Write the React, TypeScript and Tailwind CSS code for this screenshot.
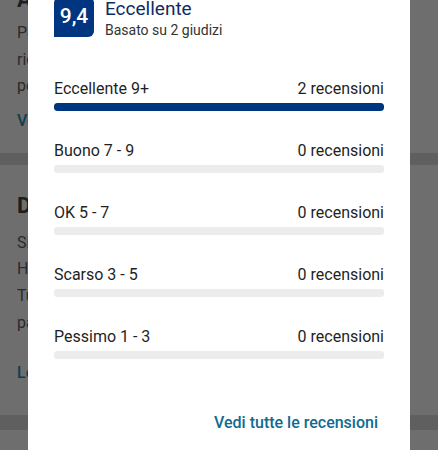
import React from "react";

const rows = [
  { label: "Eccellente 9+", count: "2 recensioni", pct: 100 },
  { label: "Buono 7 - 9", count: "0 recensioni", pct: 0 },
  { label: "OK 5 - 7", count: "0 recensioni", pct: 0 },
  { label: "Scarso 3 - 5", count: "0 recensioni", pct: 0 },
  { label: "Pessimo 1 - 3", count: "0 recensioni", pct: 0 },
];

export default function App() {
  return (
    <div className="relative h-[450px] w-[438px] overflow-hidden bg-[#6e6e6e] font-['Roboto','Liberation_Sans',sans-serif]">
      {/* background page (dimmed) */}
      <div className="flex flex-col">
        <div className="px-[17px] pb-[18px]">
          <div className="mt-[-14px] text-[22px] font-bold leading-[28px] text-[#1e1e1e] whitespace-nowrap">
            Aspetti più apprezzati
          </div>
          <div className="mt-[6px] text-[16px] leading-[26.67px] text-[#2a2a2a]">
            <div className="truncate">Posizione eccellente, a pochi passi dal centro storico</div>
            <div className="flex justify-between whitespace-nowrap">
              <span>ricco di negozi e ristoranti</span>
              <span className="pr-[22px]">l</span>
            </div>
            <div className="truncate">perfetto per una vacanza</div>
          </div>
          <div className="mt-[8px] text-[16px] font-medium leading-[26.67px] text-[#0e3e4e]">
            Vedi di più
          </div>
        </div>
        <div className="h-[12px] bg-[#5f5f5f]" />
        <div className="px-[17px] pt-[27px] pb-[28px]">
          <div className="text-[22px] font-bold leading-[28px] text-[#1e1e1e] whitespace-nowrap">
            Descrizione
          </div>
          <div className="mt-[10px] pr-[20px] text-[16px] leading-[26.67px] text-[#2a2a2a]">
            <div className="truncate">Situato nel cuore della città</div>
            <div className="truncate">Ha una terrazza panoramica</div>
            <div className="truncate">Tutte le camere dispongono di</div>
            <div className="truncate">parcheggio privato gratuito e connessione Wi-Fi gratuita in tutta la struttura</div>
          </div>
          <div className="mt-[24px] text-[16px] font-medium leading-[26.67px] text-[#0e3e4e]">
            Leggi di più
          </div>
        </div>
        <div className="h-[15px] bg-[#5f5f5f]" />
        <div className="h-[40px]" />
      </div>

      {/* modal */}
      <div className="absolute left-[28px] top-[-23px] h-[520px] w-[382px] bg-white px-[26px] pt-[20px]">
        <div className="flex items-start">
          <div className="flex h-[40px] w-[40px] items-center justify-center rounded-t-[6px] rounded-br-[6px] bg-[#003580] text-[21px] font-medium text-white">
            9,4
          </div>
          <div className="ml-[11px] mt-[0px] flex flex-col">
            <div className="text-[19px] leading-[23px] text-[#0d2c63]">Eccellente</div>
            <div className="mt-[1px] text-[14px] leading-[18px] text-[#333333]">Basato su 2 giudizi</div>
          </div>
        </div>

        <div className="mt-[40px] flex flex-col gap-[30px]">
          {rows.map((r) => (
            <div key={r.label} className="flex flex-col">
              <div className="flex justify-between text-[16px] leading-[20px] text-[#1f1f1f]">
                <span>{r.label}</span>
                <span>{r.count}</span>
              </div>
              <div className="mt-[4px] h-[8px] w-full overflow-hidden rounded-[3px] bg-[#ececec]">
                <div className="h-full rounded-[3px] bg-[#003580]" style={{ width: `${r.pct}%` }} />
              </div>
            </div>
          ))}
        </div>

        <div className="mt-[54px] flex justify-end pr-[6px]">
          <span className="text-[16px] font-medium leading-[20px] text-[#0f6b8f]">Vedi tutte le recensioni</span>
        </div>
      </div>
    </div>
  );
}
